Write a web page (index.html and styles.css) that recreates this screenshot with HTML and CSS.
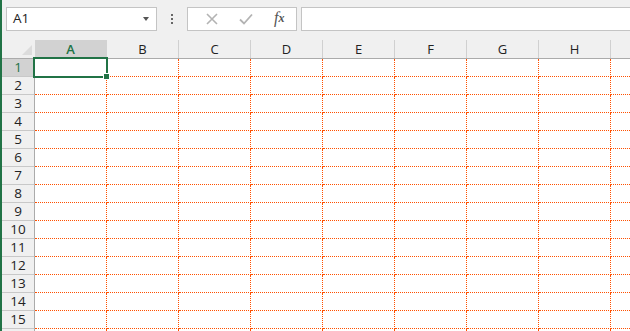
FILE: index.html
```html
<!DOCTYPE html>
<html>
<head>
<meta charset="utf-8">
<link rel="stylesheet" href="styles.css">
</head>
<body>
<div class="app">
  <div class="toolbar">
    <div class="namebox">
      <span class="name">A1</span>
      <span class="caret"></span>
    </div>
    <div class="grip"><i></i><i></i><i></i></div>
    <div class="fxgroup">
      <span class="btn">
        <svg width="12" height="12" viewBox="0 0 12 12"><path d="M1 1L11 11M11 1L1 11" stroke="#b3b3b3" stroke-width="1.6" fill="none"/></svg>
      </span>
      <span class="btn">
        <svg width="14" height="12" viewBox="0 0 14 12"><path d="M1 6.5L5 10.5L13 1.5" stroke="#b3b3b3" stroke-width="1.8" fill="none"/></svg>
      </span>
      <span class="btn fx">f<sub>x</sub></span>
    </div>
    <div class="formula"></div>
  </div>
  <div class="sheet">
    <div class="row head">
      <div class="corner"><span class="tri"></span></div>
      <div class="ch sel">A</div><div class="ch">B</div><div class="ch">C</div><div class="ch">D</div><div class="ch">E</div><div class="ch">F</div><div class="ch">G</div><div class="ch">H</div><div class="ch last"></div>
    </div>
    <div class="row"><div class="rh sel">1</div><div class="c"></div><div class="c"></div><div class="c"></div><div class="c"></div><div class="c"></div><div class="c"></div><div class="c"></div><div class="c"></div><div class="c last"></div></div>
    <div class="row"><div class="rh">2</div><div class="c"></div><div class="c"></div><div class="c"></div><div class="c"></div><div class="c"></div><div class="c"></div><div class="c"></div><div class="c"></div><div class="c last"></div></div>
    <div class="row"><div class="rh">3</div><div class="c"></div><div class="c"></div><div class="c"></div><div class="c"></div><div class="c"></div><div class="c"></div><div class="c"></div><div class="c"></div><div class="c last"></div></div>
    <div class="row"><div class="rh">4</div><div class="c"></div><div class="c"></div><div class="c"></div><div class="c"></div><div class="c"></div><div class="c"></div><div class="c"></div><div class="c"></div><div class="c last"></div></div>
    <div class="row"><div class="rh">5</div><div class="c"></div><div class="c"></div><div class="c"></div><div class="c"></div><div class="c"></div><div class="c"></div><div class="c"></div><div class="c"></div><div class="c last"></div></div>
    <div class="row"><div class="rh">6</div><div class="c"></div><div class="c"></div><div class="c"></div><div class="c"></div><div class="c"></div><div class="c"></div><div class="c"></div><div class="c"></div><div class="c last"></div></div>
    <div class="row"><div class="rh">7</div><div class="c"></div><div class="c"></div><div class="c"></div><div class="c"></div><div class="c"></div><div class="c"></div><div class="c"></div><div class="c"></div><div class="c last"></div></div>
    <div class="row"><div class="rh">8</div><div class="c"></div><div class="c"></div><div class="c"></div><div class="c"></div><div class="c"></div><div class="c"></div><div class="c"></div><div class="c"></div><div class="c last"></div></div>
    <div class="row"><div class="rh">9</div><div class="c"></div><div class="c"></div><div class="c"></div><div class="c"></div><div class="c"></div><div class="c"></div><div class="c"></div><div class="c"></div><div class="c last"></div></div>
    <div class="row"><div class="rh">10</div><div class="c"></div><div class="c"></div><div class="c"></div><div class="c"></div><div class="c"></div><div class="c"></div><div class="c"></div><div class="c"></div><div class="c last"></div></div>
    <div class="row"><div class="rh">11</div><div class="c"></div><div class="c"></div><div class="c"></div><div class="c"></div><div class="c"></div><div class="c"></div><div class="c"></div><div class="c"></div><div class="c last"></div></div>
    <div class="row"><div class="rh">12</div><div class="c"></div><div class="c"></div><div class="c"></div><div class="c"></div><div class="c"></div><div class="c"></div><div class="c"></div><div class="c"></div><div class="c last"></div></div>
    <div class="row"><div class="rh">13</div><div class="c"></div><div class="c"></div><div class="c"></div><div class="c"></div><div class="c"></div><div class="c"></div><div class="c"></div><div class="c"></div><div class="c last"></div></div>
    <div class="row"><div class="rh">14</div><div class="c"></div><div class="c"></div><div class="c"></div><div class="c"></div><div class="c"></div><div class="c"></div><div class="c"></div><div class="c"></div><div class="c last"></div></div>
    <div class="row"><div class="rh">15</div><div class="c"></div><div class="c"></div><div class="c"></div><div class="c"></div><div class="c"></div><div class="c"></div><div class="c"></div><div class="c"></div><div class="c last"></div></div>
    <div class="row"><div class="rh"></div><div class="c"></div><div class="c"></div><div class="c"></div><div class="c"></div><div class="c"></div><div class="c"></div><div class="c"></div><div class="c"></div><div class="c last"></div></div>
    <div class="selection"></div>
    <div class="handle"></div>
  </div>
</div>
</body>
</html>
```
FILE: styles.css
```css
html, body {
  margin: 0;
  padding: 0;
  background: #fff;
  overflow: hidden;
}
body {
  font-family: "Open Sans", "Noto Sans", sans-serif;
}
.app {
  border-left: 2px solid #217346;
  height: 331px;
  overflow: hidden;
}
.toolbar {
  height: 40px;
  background: #f0f0f0;
  display: flex;
  align-items: flex-start;
  padding: 7px 0 0 4px;
  box-sizing: border-box;
}
.namebox {
  width: 151px;
  height: 24px;
  box-sizing: border-box;
  border: 1px solid #c4c4c4;
  background: #fff;
  display: flex;
  align-items: center;
  justify-content: space-between;
  padding: 0 7px 0 6px;
}
.name {
  font-size: 13.5px;
  color: #222;
  line-height: 1;
}
.caret {
  width: 0;
  height: 0;
  border-left: 3.5px solid transparent;
  border-right: 3.5px solid transparent;
  border-top: 4px solid #555;
}
.grip {
  width: 30px;
  height: 24px;
  display: flex;
  flex-direction: column;
  align-items: center;
  justify-content: center;
  gap: 2px;
}
.grip i {
  display: block;
  width: 2px;
  height: 2px;
  background: #666;
}
.fxgroup {
  width: 110px;
  height: 24px;
  box-sizing: border-box;
  border: 1px solid #c4c4c4;
  background: #fff;
  display: flex;
  align-items: center;
  padding-left: 7px;
}
.btn {
  width: 34px;
  display: flex;
  align-items: center;
  justify-content: center;
}
.btn.fx {
  font-family: "Liberation Serif", "DejaVu Serif", serif;
  font-style: italic;
  font-size: 16px;
  color: #555;
  line-height: 1;
  margin-top: -3px;
}
.btn.fx sub {
  font-size: 12px;
  vertical-align: -2px;
  font-weight: bold;
}
.formula {
  flex: 1;
  height: 24px;
  box-sizing: border-box;
  border: 1px solid #c4c4c4;
  border-right: none;
  background: #fff;
  margin-left: 4px;
}
.sheet {
  position: relative;
}
.row {
  display: grid;
  grid-template-columns: 33px repeat(8, 72px) 1fr;
  height: 18px;
}
.row.head {
  height: 19px;
  background: #f0f0f0;
  border-bottom: 1px solid #ababab;
  box-sizing: border-box;
}
.corner {
  position: relative;
}
.tri {
  position: absolute;
  right: 3px;
  bottom: 3px;
  width: 0;
  height: 0;
  border-left: 10px solid transparent;
  border-bottom: 10px solid #dcdcdc;
}
.ch {
  border-right: 1px solid #d0d0d0;
  font-size: 13px;
  color: #222;
  display: flex;
  align-items: center;
  justify-content: center;
  line-height: 1;
}
.ch.sel {
  background: #d2d2d2;
  color: #217346;
  font-weight: 600;
  border-right-color: #d2d2d2;
}
.ch.last {
  border-right: none;
}
.rh {
  background: #f0f0f0;
  border-right: 1px solid #ababab;
  border-bottom: 1px solid #c8c8c8;
  font-size: 13.5px;
  color: #222;
  display: flex;
  align-items: center;
  justify-content: center;
  line-height: 1;
}
.rh.sel {
  background: #d2d2d2;
  color: #217346;
}
.c {
  border-right: 1px dotted #ff5000;
  border-bottom: 1px dotted #ff5000;
}
.c.last {
  border-right: none;
}
.row > div {
  box-sizing: border-box;
}
.selection {
  position: absolute;
  left: 31px;
  top: 17px;
  width: 75px;
  height: 21px;
  box-sizing: border-box;
  border: 2px solid #217346;
}
.handle {
  position: absolute;
  left: 101px;
  top: 33px;
  width: 7px;
  height: 7px;
  box-sizing: border-box;
  border: 1px solid #fff;
  background: #217346;
}
```
